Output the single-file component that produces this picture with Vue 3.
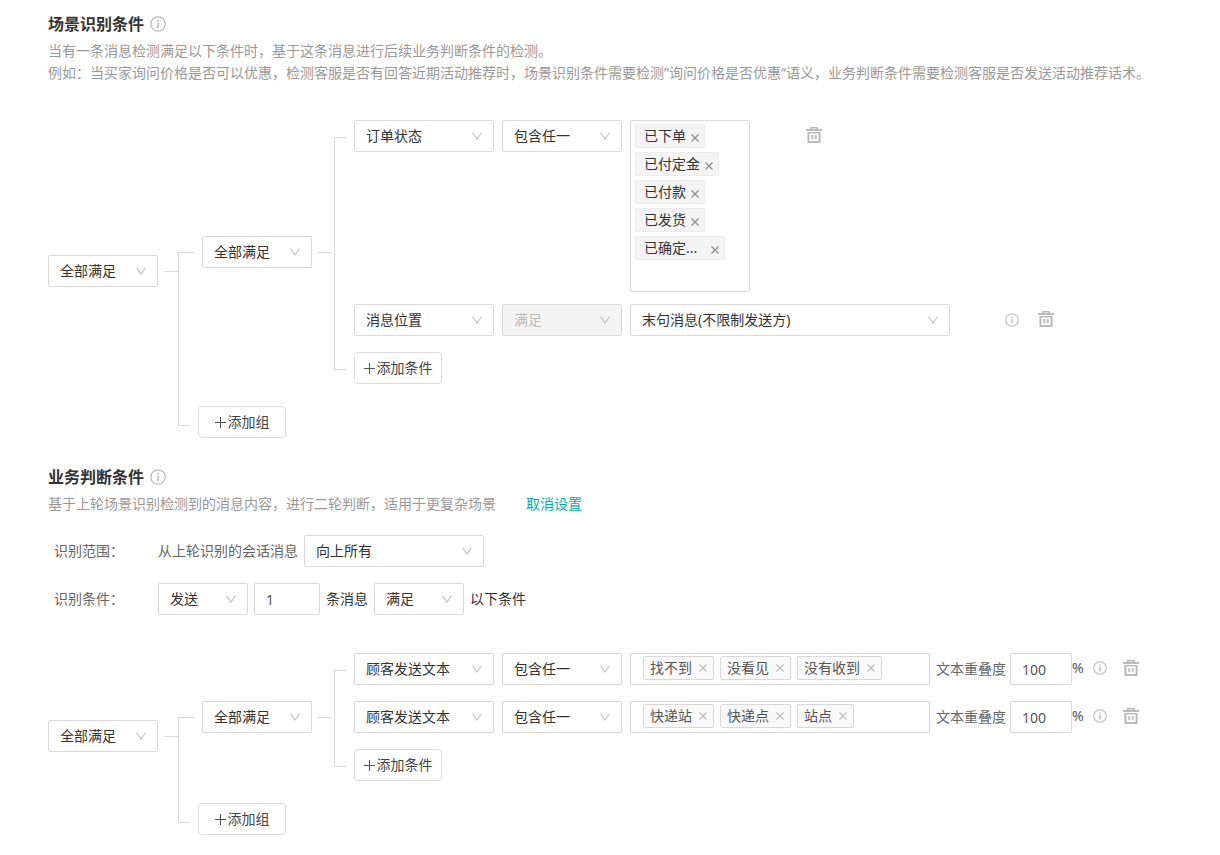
<script setup>
import { h, reactive, ref } from 'vue'

const InfoIcon = (props) =>
  h('svg', { viewBox: '0 0 16 16', width: props.size || 14, height: props.size || 14, 'aria-hidden': 'true' }, [
    h('circle', { cx: 8, cy: 8, r: 7.2, fill: 'none', stroke: 'currentColor', 'stroke-width': 1.3 }),
    h('rect', { x: 7.2, y: 4, width: 1.6, height: 1.6, fill: 'currentColor' }),
    h('rect', { x: 7.2, y: 6.8, width: 1.6, height: 5.2, fill: 'currentColor' }),
  ])
InfoIcon.props = ['size']

const TrashIcon = () =>
  h('svg', { viewBox: '0 0 16 16', width: 16, height: 16, 'aria-hidden': 'true', fill: 'currentColor' }, [
    h('path', { d: 'M4 0h8v2h4v2H0V2h4z M5.6 1.4v.6h4.8v-.6z', 'fill-rule': 'evenodd' }),
    h('path', { d: 'M1.4 4.9h13.2V16H1.4z M3.4 6.4V14h9.2V6.4z', 'fill-rule': 'evenodd' }),
    h('rect', { x: 5.3, y: 8, width: 1.9, height: 4.2 }),
    h('rect', { x: 8.8, y: 8, width: 1.9, height: 4.2 }),
  ])

const Chevron = () =>
  h('svg', { class: 'chevron', viewBox: '0 0 10 8', width: 10, height: 8, 'aria-hidden': 'true' }, [
    h('path', { d: 'M0.5 0.5 5 7 9.5 0.5', fill: 'none', stroke: '#bfbfbf', 'stroke-width': 1.1 }),
  ])

const PlusIcon = () =>
  h('svg', { viewBox: '0 0 11 11', width: 11, height: 11, 'aria-hidden': 'true' }, [
    h('path', { d: 'M5.5 0v11M0 5.5h11', stroke: '#555', 'stroke-width': 1 }),
  ])

const CrossIcon = () =>
  h('svg', { viewBox: '0 0 8 8', width: 8, height: 8, 'aria-hidden': 'true' }, [
    h('path', { d: 'M0.5 0.5l7 7M7.5 0.5l-7 7', stroke: 'currentColor', 'stroke-width': 1.1, fill: 'none' }),
  ])

const states = ref([
  { text: '已下单' },
  { text: '已付定金' },
  { text: '已付款' },
  { text: '已发货' },
  { text: '已确定...', clipped: true },
])

const textRules = reactive([
  { words: ['找不到', '没看见', '没有收到'], overlap: '100' },
  { words: ['快递站', '快递点', '站点'], overlap: '100' },
])

const count = ref('1')
</script>

<template>
  <main class="page">
    <section>
      <h2 class="title">场景识别条件 <InfoIcon class="muted" size="16" /></h2>
      <p class="desc">
        当有一条消息检测满足以下条件时，基于这条消息进行后续业务判断条件的检测。<br />
        例如：当买家询问价格是否可以优惠，检测客服是否有回答近期活动推荐时，场景识别条件需要检测”询问价格是否优惠“语义，业务判断条件需要检测客服是否发送活动推荐话术。
      </p>

      <div class="tree first-tree">
        <div class="select w110">
          <select aria-label="组关系"><option>全部满足</option></select><Chevron />
        </div>
        <i class="stem"></i>
        <div class="groups">
          <div class="rail-top"><i></i></div>
          <div class="group">
            <div class="select w110">
              <select aria-label="条件关系"><option>全部满足</option></select><Chevron />
            </div>
            <i class="stem"></i>
            <i class="bracket"></i>
            <div class="conditions">
              <div class="row top">
                <div class="select w140">
                  <select aria-label="条件类型"><option>订单状态</option></select><Chevron />
                </div>
                <div class="select w120">
                  <select aria-label="匹配方式"><option>包含任一</option></select><Chevron />
                </div>
                <ul class="states">
                  <li v-for="s in states" :key="s.text" class="state">
                    <span :class="{ clipped: s.clipped }">{{ s.text }}</span>
                    <button type="button" class="remove" :aria-label="'移除' + s.text"><CrossIcon /></button>
                  </li>
                </ul>
                <button type="button" class="icon far" aria-label="删除条件"><TrashIcon /></button>
              </div>
              <div class="row second">
                <div class="select w140">
                  <select aria-label="条件类型"><option>消息位置</option></select><Chevron />
                </div>
                <div class="select w120">
                  <select aria-label="匹配方式" disabled><option>满足</option></select><Chevron />
                </div>
                <div class="select w320">
                  <select aria-label="消息位置"><option>末句消息(不限制发送方)</option></select><Chevron />
                </div>
                <span class="icon info"><InfoIcon /></span>
                <button type="button" class="icon next" aria-label="删除条件"><TrashIcon /></button>
              </div>
              <button type="button" class="add"><PlusIcon />添加条件</button>
            </div>
          </div>
          <i class="rail-bottom"></i>
          <div class="add-group"><button type="button" class="add"><PlusIcon />添加组</button></div>
        </div>
      </div>
    </section>

    <section class="judge">
      <h2 class="title">业务判断条件 <InfoIcon class="muted" size="16" /></h2>
      <p class="desc">
        基于上轮场景识别检测到的消息内容，进行二轮判断，适用于更复杂场景<a href="#" class="link">取消设置</a>
      </p>

      <div class="field range">
        <span class="label">识别范围：</span>
        <label for="range" class="soft">从上轮识别的会话消息</label>
        <div class="select w180">
          <select id="range"><option>向上所有</option></select><Chevron />
        </div>
      </div>
      <div class="field">
        <span class="label">识别条件：</span>
        <div class="select w90">
          <select aria-label="发送"><option>发送</option></select><Chevron />
        </div>
        <input id="count" v-model="count" class="input w66" type="text" />
        <label for="count">条消息</label>
        <div class="select w90">
          <select id="match"><option>满足</option></select><Chevron />
        </div>
        <label for="match">以下条件</label>
      </div>

      <div class="tree second-tree">
        <div class="select w110">
          <select aria-label="组关系"><option>全部满足</option></select><Chevron />
        </div>
        <i class="stem"></i>
        <div class="groups">
          <div class="rail-top"><i></i></div>
          <div class="group">
            <div class="select w110">
              <select aria-label="条件关系"><option>全部满足</option></select><Chevron />
            </div>
            <i class="stem"></i>
            <i class="bracket"></i>
            <div class="conditions">
              <div v-for="(rule, i) in textRules" :key="i" class="row spaced">
                <div class="select w140">
                  <select aria-label="条件类型"><option>顾客发送文本</option></select><Chevron />
                </div>
                <div class="select w120">
                  <select aria-label="匹配方式"><option>包含任一</option></select><Chevron />
                </div>
                <ul class="words">
                  <li v-for="w in rule.words" :key="w" class="word">
                    {{ w }}
                    <button type="button" class="remove" :aria-label="'移除' + w"><CrossIcon /></button>
                  </li>
                </ul>
                <label class="overlap soft" :for="'overlap' + i">文本重叠度</label>
                <input :id="'overlap' + i" v-model="rule.overlap" class="input w62" type="text" />
                <span class="percent">%</span>
                <span class="icon near"><InfoIcon /></span>
                <button type="button" class="icon after" aria-label="删除条件"><TrashIcon /></button>
              </div>
              <button type="button" class="add"><PlusIcon />添加条件</button>
            </div>
          </div>
          <i class="rail-bottom"></i>
          <div class="add-group"><button type="button" class="add"><PlusIcon />添加组</button></div>
        </div>
      </div>
    </section>
  </main>
</template>

<style>
body {
  background: #fff;
}
</style>

<style scoped>
.page,
.page * {
  box-sizing: border-box;
}
.page {
  padding: 12px 48px 20px;
  font: 14px/22px 'Noto Sans', 'Noto Sans CJK SC', sans-serif;
  color: #333;
}
.page select,
.page input,
.page button {
  font: inherit;
}
svg {
  display: block;
}
.title {
  display: flex;
  align-items: center;
  gap: 6px;
  margin: 0;
  font-size: 16px;
  line-height: 24px;
  font-weight: 700;
}
.muted {
  color: #bbb;
}
.desc {
  margin: 4px 0 0;
  color: #999;
}
.link {
  margin-left: 30px;
  color: #00b0ac;
  text-decoration: none;
}
.judge {
  margin-top: 27px;
}

/* Form controls */
.select {
  display: grid;
  flex: none;
  align-items: center;
  height: 32px;
}
.select > * {
  grid-area: 1 / 1;
}
.select select {
  width: 100%;
  height: 32px;
  padding: 0 24px 0 11px;
  appearance: none;
  border: 1px solid #d9d9d9;
  border-radius: 2px;
  background: #fff;
  color: #333;
}
.select select:disabled {
  background: #f4f4f4;
  color: #bbb;
  opacity: 1;
}
.chevron {
  justify-self: end;
  margin-right: 12px;
  pointer-events: none;
}
.w90 { width: 90px; }
.w110 { width: 110px; }
.w120 { width: 120px; }
.w140 { width: 140px; }
.w180 { width: 180px; }
.w320 { width: 320px; }
.w62 { width: 62px; }
.w66 { width: 66px; }
.input {
  flex: none;
  height: 32px;
  padding: 0 11px;
  border: 1px solid #d9d9d9;
  border-radius: 2px;
  background: #fff;
  color: #555;
}
.field {
  display: flex;
  align-items: center;
  gap: 6px;
  margin-top: 16px;
}
.range {
  margin-top: 20px;
}
.label {
  width: 98px;
  margin-left: 6px;
  color: #666;
}
.soft {
  color: #666;
}

/* Condition tree */
.tree {
  display: flex;
  align-items: center;
}
.first-tree {
  margin-top: 20px;
}
.second-tree {
  margin-top: 22px;
}
.stem {
  flex: none;
  width: 14px;
  height: 1px;
  margin-left: 6px;
  background: #d9d9d9;
}
.groups {
  display: grid;
  grid-template-columns: 16px auto;
  padding-top: 16px;
}
.rail-top {
  display: flex;
  align-items: flex-end;
}
.rail-top i {
  width: 16px;
  height: 50%;
  border: solid #d9d9d9;
  border-width: 1px 0 0 1px;
}
.rail-bottom {
  width: 12px;
  margin-bottom: 12px;
  border: solid #d9d9d9;
  border-width: 0 0 1px 1px;
}
.add-group {
  padding: 22px 0 0 4px;
}
.group {
  display: flex;
  align-items: center;
  padding-left: 8px;
}
.bracket {
  flex: none;
  align-self: stretch;
  width: 12px;
  margin: 17px 8px 14px 2px;
  border: 1px solid #d9d9d9;
  border-right: 0;
}
.row {
  display: flex;
  align-items: center;
  gap: 8px;
}
.row.top {
  align-items: flex-start;
  margin-bottom: 12px;
}
.row.second,
.row.spaced {
  margin-bottom: 16px;
}
.row.spaced {
  gap: 0;
}
.row.spaced > .select {
  margin-right: 8px;
}
.add {
  display: flex;
  align-items: center;
  justify-content: center;
  gap: 2px;
  width: 88px;
  height: 32px;
  padding: 0;
  border: 1px solid #ddd;
  border-radius: 4px;
  background: #fff;
  color: #444;
}

/* Tags */
.states,
.words {
  flex: none;
  display: flex;
  margin: 0;
  padding: 0;
  list-style: none;
  border: 1px solid #d9d9d9;
  border-radius: 2px;
}
.states {
  flex-direction: column;
  align-items: flex-start;
  gap: 4px;
  width: 120px;
  min-height: 172px;
  padding: 3px 4px 31px;
}
.state {
  display: flex;
  align-items: center;
  gap: 5px;
  height: 24px;
  padding: 0 5px 0 8px;
  border: 1px solid #ececec;
  border-radius: 2px;
  background: #f4f4f4;
}
.clipped {
  width: 62px;
}
.remove {
  display: block;
  padding: 0;
  border: 0;
  background: none;
  color: #bbb;
}
.state .remove {
  padding-top: 3px;
  color: #888;
}
.words {
  gap: 6px;
  width: 300px;
  height: 32px;
  padding: 2px 12px;
}
.word {
  display: flex;
  align-items: center;
  gap: 7px;
  height: 24px;
  padding: 0 6px;
  border: 1px solid #d9d9d9;
  border-radius: 2px;
  background: #f9f9f9;
  color: #555;
}
.overlap {
  margin: 0 4px 0 6px;
}
.percent {
  align-self: flex-start;
  width: 11px;
  line-height: 30px;
  color: #555;
}
.icon {
  flex: none;
  display: flex;
  align-self: flex-start;
  align-items: center;
  height: 30px;
  padding: 0;
  border: 0;
  background: none;
  color: #bbb;
}
.far {
  margin-left: 48px;
}
.info {
  height: 32px;
  margin-left: 47px;
}
.next {
  margin-left: 11px;
}
.near {
  margin-left: 10px;
}
.after {
  margin-left: 16px;
}
</style>
